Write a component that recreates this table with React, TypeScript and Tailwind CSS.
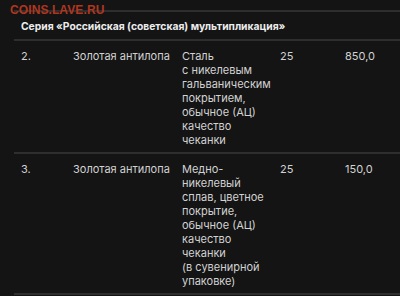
import React from "react";

const Cell = ({ lines }: { lines: string[] }) => (
  <div className="flex flex-col">
    {lines.map((l, i) => (
      <span key={i} className="block whitespace-nowrap">{l}</span>
    ))}
  </div>
);

const Row = ({ n, name, mat, qty, price }: { n: string; name: string; mat: string[]; qty: string; price: string }) => (
  <div className="ml-[14px] border-b-2 border-[#2e2e2e] grid grid-cols-[52px_109px_98px_65px_1fr] pl-[7px] pt-[8px] pb-[5px]">
    <div>{n}</div>
    <div>{name}</div>
    <Cell lines={mat} />
    <div>{qty}</div>
    <div>{price}</div>
  </div>
);

export default function App() {
  return (
    <div className="relative w-[400px] h-[296px] overflow-hidden bg-[#141414] text-[#d2d2d2] text-[11px] leading-[14px]" style={{ fontFamily: "Inter, 'Noto Sans', sans-serif" }}>
      <div className="-mt-[12px]">
        <div className="ml-[14px] border-b-2 border-[#2e2e2e] grid grid-cols-[52px_109px_98px_65px_1fr] pl-[7px] pb-[8px]">
          <div></div>
          <div></div>
          <div>чеканки</div>
          <div></div>
          <div></div>
        </div>
        <div className="ml-[14px] border-b-2 border-[#2e2e2e] pl-[7px] h-[29px] flex items-center font-bold text-[#ececec] text-[10.3px]">
          Серия «Российская (советская) мультипликация»
        </div>
        <Row
          n="2."
          name="Золотая антилопа"
          mat={["Сталь", "с никелевым", "гальваническим", "покрытием,", "обычное (АЦ)", "качество", "чеканки"]}
          qty="25"
          price="850,0"
        />
        <Row
          n="3."
          name="Золотая антилопа"
          mat={["Медно-", "никелевый", "сплав, цветное", "покрытие,", "обычное (АЦ)", "качество", "чеканки", "(в сувенирной", "упаковке)"]}
          qty="25"
          price="150,0"
        />
      </div>
      <div
        className="absolute left-[10px] top-[3px] text-[12px] font-bold text-[#b0361f] tracking-[0.1px]"
        style={{ fontFamily: "'Liberation Sans', Arial, sans-serif" }}
      >
        COINS.LAVE.RU
      </div>
    </div>
  );
}
